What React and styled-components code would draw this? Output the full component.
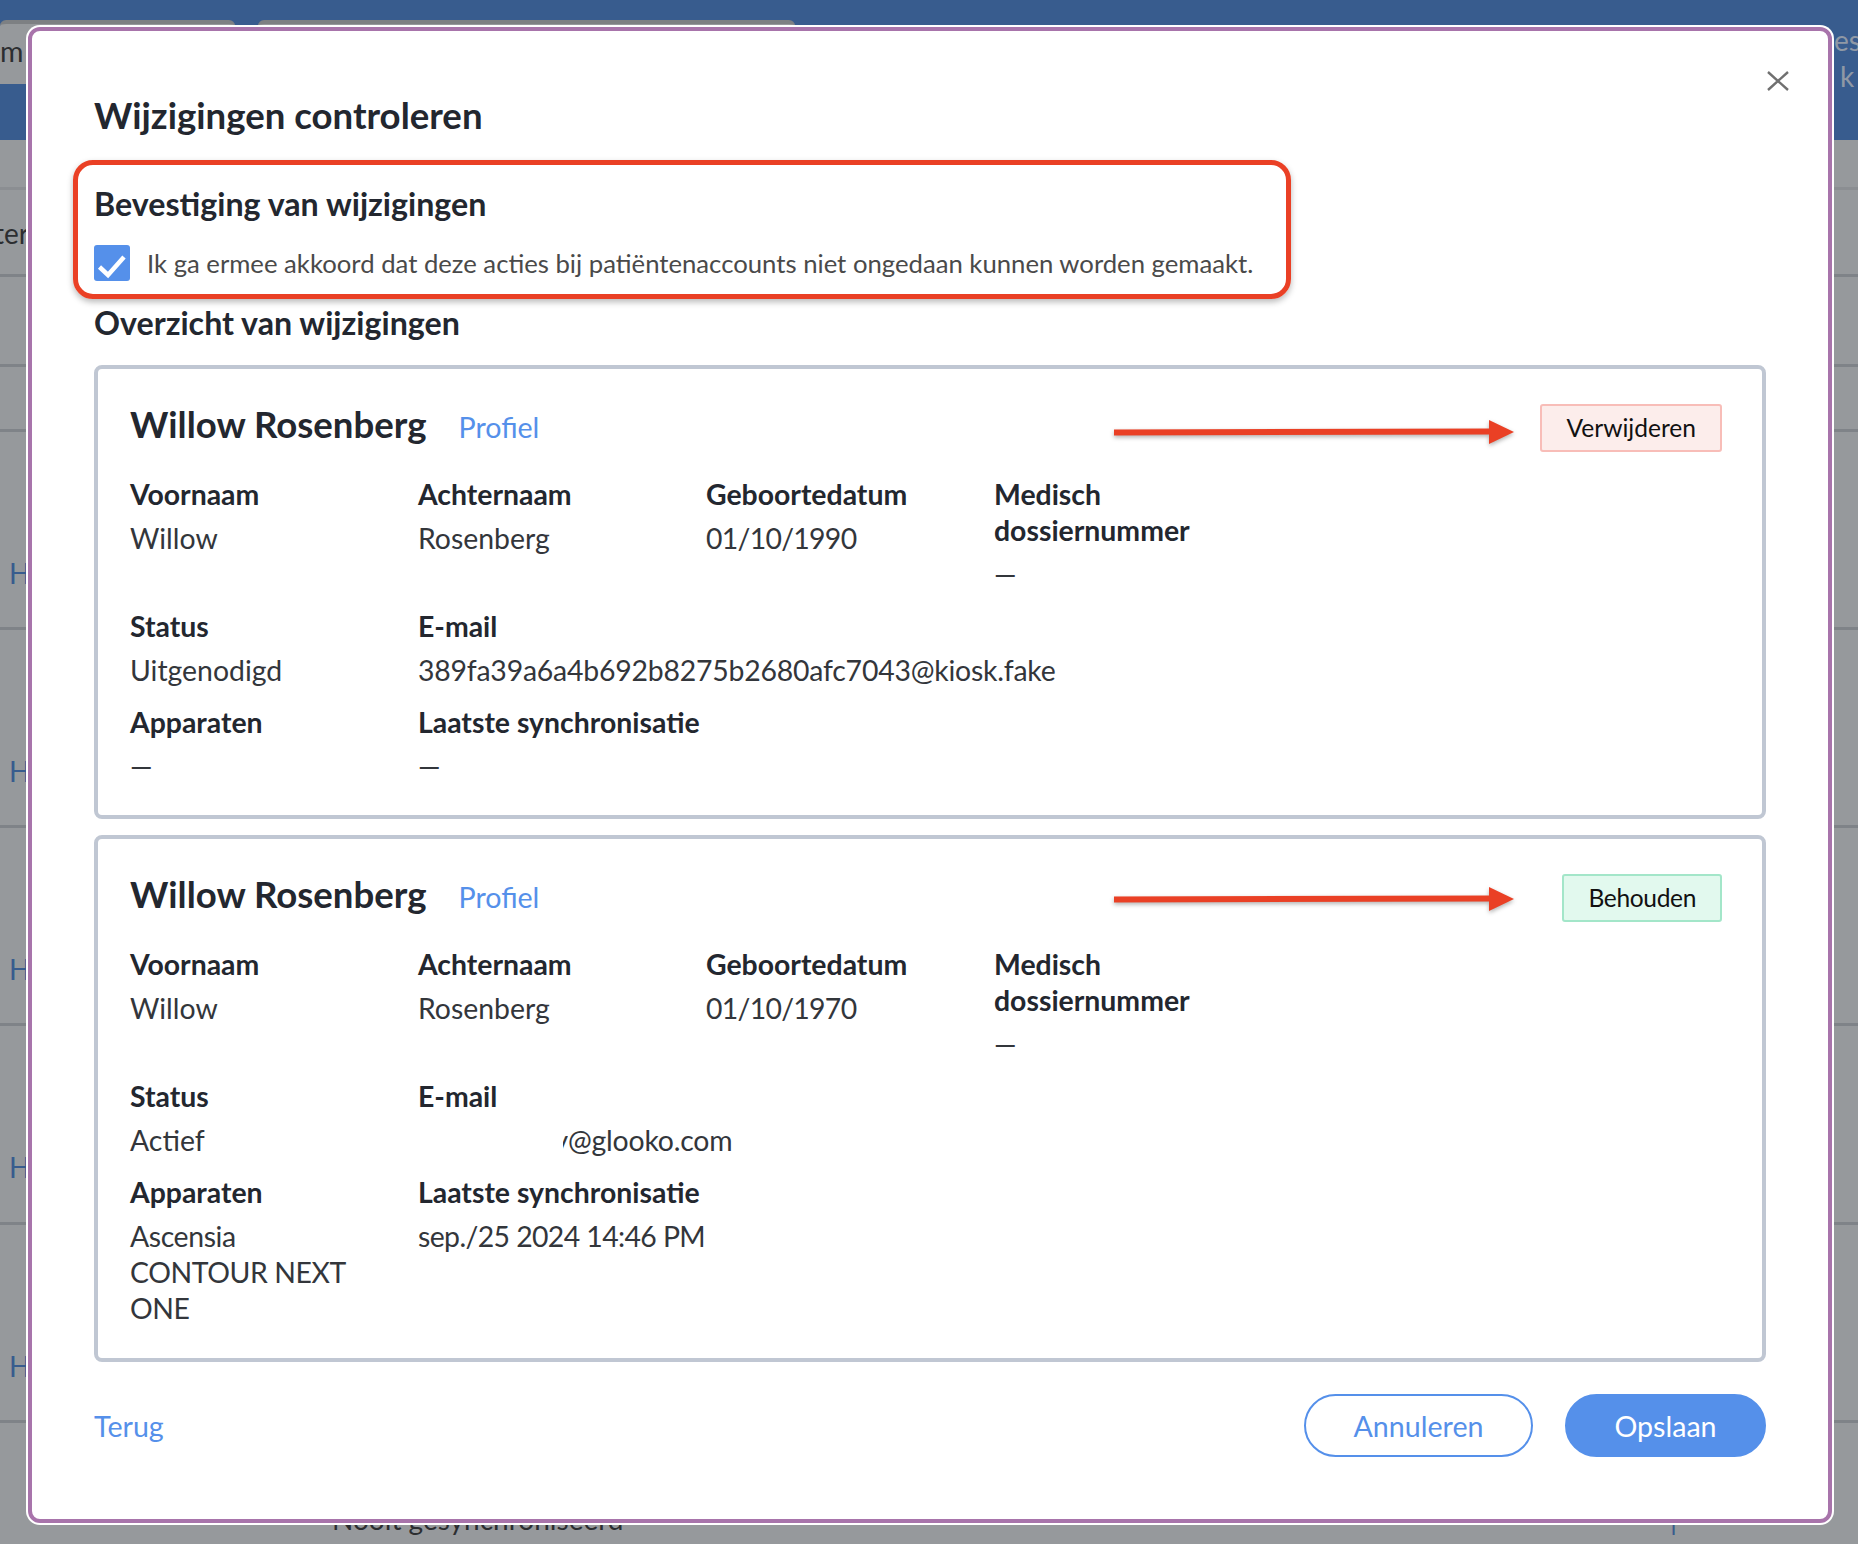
import React from "react";
import styled, { createGlobalStyle } from "styled-components";

const Global = createGlobalStyle`
  html, body { margin: 0; padding: 0; background: #96999c; }
  body { font-family: Lato, "Open Sans", "Liberation Sans", sans-serif; width: 1858px; height: 1544px; overflow: hidden; }
  * { box-sizing: border-box; }
`;

const Page = styled.div`
  position: relative;
  width: 1858px;
  height: 1544px;
  overflow: hidden;
  background: #96999c;
`;

const Header = styled.header`
  display: flex;
  align-items: flex-start;
  height: 140px;
  padding-top: 20px;
  background: #385c8e;
`;
const TabStack = styled.div`
  display: flex;
  gap: 23px;
`;
const Tab = styled.div`
  width: ${(p) => p.$width}px;
  height: 64px;
  padding: 9px 0 0 0;
  border-top: 4px solid #7d8083;
  border-radius: 6px 6px 0 0;
  background: #96999c;
  color: #2c2e31;
  font-size: 28.5px;
  line-height: 36px;
`;
const HeaderEnd = styled.div`
  width: 24px;
  margin-left: auto;
  margin-top: 2px;
  color: #8f98a5;
  font-size: 28px;
  line-height: 36px;
  overflow: hidden;
`;
const EndLine = styled.div`
  padding-left: ${(p) => p.$indent || 0}px;
  white-space: nowrap;
`;

const Rows = styled.div`
  display: flex;
  flex-direction: column;
`;
const Row = styled.div`
  display: flex;
  height: ${(p) => p.$height}px;
  padding-top: ${(p) => p.$top || 0}px;
  border-bottom: 3px solid ${(p) => (p.$faint ? "#8b8e92" : "#7f8388")};
  color: #2c2e31;
  font-size: 28px;
  line-height: 36px;
`;
const ClippedText = styled.span`
  margin-left: -6px;
`;
const RowLink = styled.span`
  margin-left: 9px;
  width: 323px;
  color: #385c8e;
`;
const RowText = styled.span`
  width: 1338px;
  margin-top: 78px;
  color: #2c2e31;
`;
const RowMark = styled.span`
  color: #385c8e;
  margin-top: 78px;
`;

const Modal = styled.section`
  position: absolute;
  left: 28px;
  top: 27px;
  width: 1804px;
  height: 1496px;
  padding: 62px 62px 0;
  background: #fff;
  border: 4px solid #a874ab;
  border-radius: 12px;
  box-shadow: 0 0 0 2px #fff;
  color: #23272f;
`;
const Close = styled.button`
  position: absolute;
  top: 40px;
  right: 39px;
  display: flex;
  width: 22px;
  height: 20px;
  padding: 0;
  border: 0;
  background: none;
  color: #707070;
`;
const Title = styled.h1`
  margin: 0;
  font-size: 36.6px;
  line-height: 44px;
  font-weight: 700;
`;
const Confirm = styled.div`
  width: 1218px;
  height: 139px;
  margin: 23px 0 0 -21px;
  padding: 19px 0 0 16px;
  border: 5px solid #ea4025;
  border-radius: 20px;
  box-shadow: 0 3px 6px rgba(0, 0, 0, 0.28);
`;
const SubTitle = styled.h2`
  margin: ${(p) => p.$top || 0}px 0 0;
  font-size: 32.2px;
  line-height: 40px;
  font-weight: 700;
`;
const CheckRow = styled.label`
  display: flex;
  align-items: center;
  gap: 17px;
  margin-top: 21px;
  color: #4a4a4a;
  font-size: 25.7px;
  line-height: 36px;
  white-space: nowrap;
`;
const CheckBox = styled.span`
  display: flex;
  flex: none;
  width: 36px;
  height: 36px;
  border-radius: 3px;
  background: #5590ea;
`;

const Card = styled.article`
  position: relative;
  margin-top: ${(p) => p.$top}px;
  padding: 35px 40px ${(p) => p.$bottom}px 32px;
  border: 4px solid #c0c7d3;
  border-radius: 8px;
`;
const CardHead = styled.div`
  display: flex;
  align-items: center;
  height: 48px;
`;
const Name = styled.h3`
  margin: -8px 0 0;
  font-size: 36.6px;
  line-height: 44px;
  font-weight: 700;
`;
const Link = styled.a`
  color: #5590ea;
  font-size: 28.6px;
  line-height: 36px;
`;
const ProfileLink = styled(Link)`
  margin: -3px 0 0 32px;
`;
const Badge = styled.span`
  margin-left: auto;
  height: 48px;
  padding: 0 24px;
  border: 2px solid ${(p) => (p.$tone === "red" ? "#f8bdb8" : "#a3e6c9")};
  border-radius: 3px;
  background: ${(p) => (p.$tone === "red" ? "#fcedeb" : "#e2f9ee")};
  color: #111;
  font-size: 24.55px;
  line-height: 44px;
  letter-spacing: ${(p) => (p.$tone === "red" ? 0 : -0.35)}px;
`;
const Arrow = styled.svg`
  position: absolute;
  left: 1016px;
  top: ${(p) => p.$top}px;
  filter: drop-shadow(0 2px 2px rgba(0, 0, 0, 0.3));
`;
const Fields = styled.div`
  display: grid;
  grid-template-columns: repeat(4, 240px);
  column-gap: 48px;
  row-gap: 16px;
  margin-top: 24px;
`;
const Field = styled.div`
  grid-column: span ${(p) => p.$span || 1};
  font-size: 28.4px;
  line-height: 36px;
`;
const FieldLabel = styled.div`
  margin-bottom: 8px;
  font-weight: 700;
`;
const FieldValue = styled.div`
  color: #33363b;
  letter-spacing: ${(p) => p.$tracking || 0}px;
`;
const Redacted = styled.span`
  display: inline-block;
  width: 150px;
  text-align: right;
  clip-path: inset(0 0 0 145px);
`;

const Footer = styled.footer`
  display: flex;
  align-items: center;
  justify-content: space-between;
  margin-top: 32px;
`;
const Buttons = styled.div`
  display: flex;
  gap: 32px;
`;
const Pill = styled.button`
  width: ${(p) => p.$width}px;
  height: 63px;
  border: 2px solid #5590ea;
  border-radius: 32px;
  background: ${(p) => (p.$solid ? "#5590ea" : "#fff")};
  color: ${(p) => (p.$solid ? "#fff" : "#5590ea")};
  font-family: inherit;
  font-size: 28.6px;
`;

const ArrowIcon = ({ top }) => (
  <Arrow $top={top} width="400" height="28" viewBox="0 0 400 28">
    <path d="M0 14.5 L378 13.5" stroke="#ea4025" strokeWidth="6" fill="none" />
    <path d="M375 2 L400 14 L375 26 Z" fill="#ea4025" />
  </Arrow>
);

const Item = ({ label, span, tracking, children }) => (
  <Field $span={span}>
    <FieldLabel>{label}</FieldLabel>
    <FieldValue $tracking={tracking}>{children}</FieldValue>
  </Field>
);

const MedicalLabel = "Medisch dossiernummer";

const rows = [
  { height: 50, faint: true },
  { height: 87, text: "ter", top: 25 },
  { height: 90 },
  { height: 65 },
  { height: 198, link: true },
  { height: 198, link: true },
  { height: 198, link: true },
  { height: 199, link: true },
  { height: 198, link: true },
  { height: 198, last: true },
];

export default function App() {
  return (
    <Page>
      <Global />
      <Header>
        <TabStack>
          <Tab $width={235}>m</Tab>
          <Tab $width={537} />
        </TabStack>
        <HeaderEnd>
          <EndLine>es</EndLine>
          <EndLine $indent={6}>k</EndLine>
        </HeaderEnd>
      </Header>
      <Rows>
        {rows.map((r, i) => (
          <Row key={i} $height={r.height} $faint={r.faint} $top={r.link ? 123 : r.top}>
            {r.text && <ClippedText>{r.text}</ClippedText>}
            {r.link && <RowLink>H</RowLink>}
            {r.last && (
              <>
                <RowLink />
                <RowText>Nooit gesynchroniseerd</RowText>
                <RowMark>|</RowMark>
              </>
            )}
          </Row>
        ))}
      </Rows>

      <Modal>
        <Close aria-label="Sluiten">
          <svg width="22" height="20" viewBox="0 0 22 20">
            <path d="M1 1 L21 19 M21 1 L1 19" stroke="currentColor" strokeWidth="2.4" fill="none" />
          </svg>
        </Close>
        <Title>Wijzigingen controleren</Title>
        <Confirm>
          <SubTitle>Bevestiging van wijzigingen</SubTitle>
          <CheckRow>
            <CheckBox>
              <svg width="36" height="36" viewBox="0 0 36 36">
                <path d="M5.5 22 L14 30 L30 12" stroke="#fff" strokeWidth="4.5" fill="none" />
              </svg>
            </CheckBox>
            Ik ga ermee akkoord dat deze acties bij patiëntenaccounts niet ongedaan kunnen worden gemaakt.
          </CheckRow>
        </Confirm>
        <SubTitle $top={4}>Overzicht van wijzigingen</SubTitle>

        <Card $top={22} $bottom={31}>
          <ArrowIcon top={49} />
          <CardHead>
            <Name>Willow Rosenberg</Name>
            <ProfileLink>Profiel</ProfileLink>
            <Badge $tone="red">Verwijderen</Badge>
          </CardHead>
          <Fields>
            <Item label="Voornaam">Willow</Item>
            <Item label="Achternaam">Rosenberg</Item>
            <Item label="Geboortedatum" tracking={-0.7}>01/10/1990</Item>
            <Item label={MedicalLabel}>—</Item>
            <Item label="Status">Uitgenodigd</Item>
            <Item label="E-mail" span={3} tracking={-0.2}>389fa39a6a4b692b8275b2680afc7043@kiosk.fake</Item>
            <Item label="Apparaten">—</Item>
            <Item label="Laatste synchronisatie" span={3}>—</Item>
          </Fields>
        </Card>

        <Card $top={16} $bottom={32}>
          <ArrowIcon top={46} />
          <CardHead>
            <Name>Willow Rosenberg</Name>
            <ProfileLink>Profiel</ProfileLink>
            <Badge $tone="green">Behouden</Badge>
          </CardHead>
          <Fields>
            <Item label="Voornaam">Willow</Item>
            <Item label="Achternaam">Rosenberg</Item>
            <Item label="Geboortedatum" tracking={-0.7}>01/10/1970</Item>
            <Item label={MedicalLabel}>—</Item>
            <Item label="Status">Actief</Item>
            <Item label="E-mail" span={3} tracking={-0.2}>
              <Redacted>y</Redacted>@glooko.com
            </Item>
            <Item label="Apparaten" tracking={-0.4}>Ascensia CONTOUR NEXT ONE</Item>
            <Item label="Laatste synchronisatie" span={3} tracking={-0.6}>sep./25 2024 14:46 PM</Item>
          </Fields>
        </Card>

        <Footer>
          <Link>Terug</Link>
          <Buttons>
            <Pill $width={229}>Annuleren</Pill>
            <Pill $width={201} $solid>Opslaan</Pill>
          </Buttons>
        </Footer>
      </Modal>
    </Page>
  );
}
